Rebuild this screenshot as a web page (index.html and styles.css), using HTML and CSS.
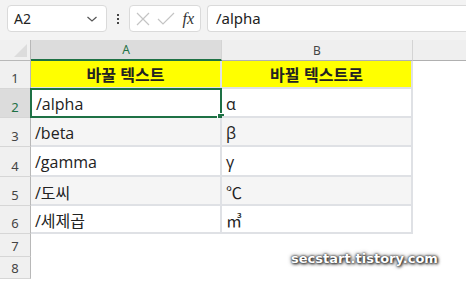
FILE: index.html
```html
<!DOCTYPE html>
<html lang="ko">
<head>
  <meta charset="UTF-8">
  <title>Sheet</title>
  <link rel="stylesheet" href="styles.css">
</head>
<body>
  <div class="topbar">
    <div class="namebox">
      <span>A2</span>
      <svg width="12" height="8" viewBox="0 0 12 8"><path d="M1.5 2 L6 6 L10.5 2" fill="none" stroke="#555" stroke-width="1.2"/></svg>
    </div>
    <div class="dots"><i></i><i></i><i></i></div>
    <div class="fxbox">
      <svg width="16" height="16" viewBox="0 0 16 16"><path d="M2 2 L14 14 M14 2 L2 14" stroke="#c4c4c4" stroke-width="1.2"/></svg>
      <svg width="18" height="16" viewBox="0 0 18 16"><path d="M1 8 L6 13 L17 2" fill="none" stroke="#c4c4c4" stroke-width="1.2"/></svg>
      <span class="fx">fx</span>
    </div>
    <div class="formula">/alpha</div>
  </div>

  <div class="sheet">
    <div class="corner"></div>
    <div class="colhead sel">A</div>
    <div class="colhead">B</div>
    <div class="colhead rest"></div>

    <div class="rowhead">1</div>
    <div class="cell head">바꿀 텍스트</div>
    <div class="cell head">바뀔 텍스트로</div>
    <div class="empty"></div>

    <div class="rowhead sel">2</div>
    <div class="cell active">/alpha<span class="handle"></span></div>
    <div class="cell">α</div>
    <div class="empty"></div>

    <div class="rowhead">3</div>
    <div class="cell band">/beta</div>
    <div class="cell band">β</div>
    <div class="empty"></div>

    <div class="rowhead">4</div>
    <div class="cell">/gamma</div>
    <div class="cell">γ</div>
    <div class="empty"></div>

    <div class="rowhead">5</div>
    <div class="cell band">/도씨</div>
    <div class="cell band">℃</div>
    <div class="empty"></div>

    <div class="rowhead">6</div>
    <div class="cell">/세제곱</div>
    <div class="cell">㎥</div>
    <div class="empty"></div>

    <div class="rowhead">7</div>
    <div class="empty wide"></div>

    <div class="rowhead">8</div>
    <div class="empty wide"></div>
  </div>

  <div class="watermark">secstart.tistory.com</div>
</body>
</html>
```

FILE: styles.css
```css
body {
  margin: 0;
  width: 466px;
  height: 284px;
  overflow: hidden;
  background-color: #ffffff;
  font-family: "Noto Sans", "Noto Sans CJK KR", sans-serif;
  color: #222;
  position: relative;
}

.topbar {
  height: 40px;
  background-color: #f3f3f3;
  display: flex;
  align-items: flex-start;
  padding: 5px 0 0 7px;
  box-sizing: border-box;
}

.namebox {
  width: 100px;
  height: 27px;
  box-sizing: border-box;
  background-color: #fff;
  border: 1px solid #dadada;
  border-radius: 4px;
  display: flex;
  align-items: center;
  justify-content: space-between;
  padding: 0 8px 0 6px;
  font-size: 14px;
  color: #222;
}

.dots {
  width: 22px;
  height: 27px;
  display: flex;
  flex-direction: column;
  align-items: center;
  justify-content: center;
  gap: 2px;
}

.dots i {
  width: 2px;
  height: 2px;
  background-color: #444;
}

.fxbox {
  width: 72px;
  height: 27px;
  box-sizing: border-box;
  background-color: #fff;
  border: 1px solid #dadada;
  border-radius: 4px;
  display: flex;
  align-items: center;
  gap: 6px;
  padding: 0 6px 0 5px;
}

.fx {
  font-family: "Liberation Serif", serif;
  font-style: italic;
  font-size: 16px;
  color: #333;
  margin-left: auto;
}

.formula {
  flex: 1;
  height: 27px;
  margin-left: 6px;
  box-sizing: border-box;
  background-color: #fff;
  border: 1px solid #dadada;
  border-right: none;
  border-radius: 4px 0 0 4px;
  padding-left: 8px;
  font-size: 15px;
  line-height: 25px;
}

.sheet {
  display: grid;
  grid-template-columns: 31px 191px 191px 1fr;
  grid-template-rows: 21px 28px 29px 29px 30px 29px 28px 23px 22px;
}

.corner {
  background-color: #f0f0f0;
  border-right: 1px solid #b8b8b8;
  border-bottom: 1px solid #b8b8b8;
  position: relative;
}

.corner::after {
  content: "";
  position: absolute;
  right: 3px;
  bottom: 3px;
  border-left: 13px solid transparent;
  border-bottom: 13px solid #dcdcdc;
}

.colhead {
  background-color: #efefef;
  border-right: 1px solid #d4d4d4;
  border-bottom: 1px solid #b0b0b0;
  font-size: 12px;
  color: #444;
  display: flex;
  align-items: center;
  justify-content: center;
}

.colhead.sel {
  background-color: #dcdcdc;
  color: #1e7145;
  border-bottom: 2px solid #1e7145;
}

.colhead.rest {
  border-right: none;
}

.rowhead {
  background-color: #f0f0f0;
  border-right: 1px solid #b8b8b8;
  border-bottom: 1px solid #d6d6d6;
  font-size: 13px;
  color: #444;
  display: flex;
  align-items: flex-end;
  justify-content: center;
  padding-bottom: 1px;
  box-sizing: border-box;
}

.rowhead.sel {
  background-color: #dcdcdc;
  color: #1e7145;
}

.cell {
  border-right: 2px solid #dfe1e5;
  border-bottom: 2px solid #dfe1e5;
  font-size: 16px;
  padding: 2px 0 0 4px;
  display: flex;
  align-items: center;
  position: relative;
  font-family: "Open Sans", "Noto Sans CJK KR", sans-serif;
}

.cell.head {
  background-color: #ffff00;
  justify-content: center;
  font-weight: bold;
  font-family: "Noto Sans CJK KR", sans-serif;
  padding: 0;
}

.cell.band {
  background-color: #f5f5f5;
}

.cell.active {
  border: 2px solid #1e7145;
  margin: -1px 0 0 -1px;
}

.handle {
  position: absolute;
  right: -5px;
  bottom: -5px;
  width: 6px;
  height: 6px;
  background-color: #1e7145;
  border: 1px solid #fff;
}

.empty.wide {
  grid-column: 2 / 5;
}

.watermark {
  position: absolute;
  left: 291px;
  top: 251px;
  font-family: "DejaVu Sans", sans-serif;
  font-weight: bold;
  font-size: 13px;
  color: #fff;
  text-shadow: 0 0 2px #222, 1px 1px 3px #222, 0 0 4px #444;
}
```
